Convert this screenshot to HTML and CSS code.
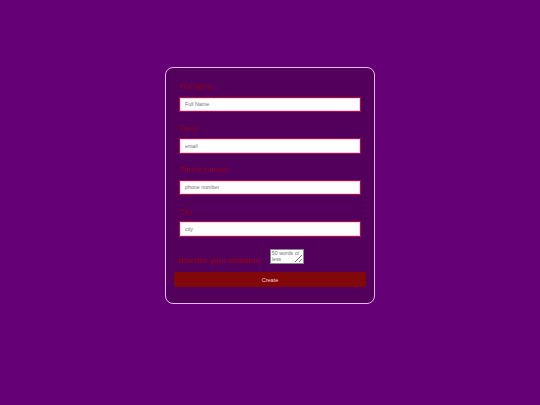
FILE: index.html
```html
<!DOCTYPE html>
<html lang="en">
<head>
<meta charset="utf-8">
<title>Create</title>
<link rel="stylesheet" href="styles.css">
</head>
<body>
<form class="card">
  <div class="field">
    <label class="label" for="name">Full Name</label>
    <input class="input" id="name" type="text" placeholder="Full Name">
  </div>
  <div class="field">
    <label class="label" for="email">Email</label>
    <input class="input" id="email" type="text" placeholder="email">
  </div>
  <div class="field">
    <label class="label" for="phone">Phone number</label>
    <input class="input" id="phone" type="text" placeholder="phone number">
  </div>
  <div class="field">
    <label class="label" for="city">City</label>
    <input class="input" id="city" type="text" placeholder="city">
  </div>
  <div class="situation">
    <label class="situation-label" for="desc">Discribe your situation:</label>
    <textarea class="textarea" id="desc" placeholder="50 words or less"></textarea>
  </div>
  <button class="btn" type="button">Create</button>
</form>
</body>
</html>
```
FILE: styles.css
```css
* { box-sizing: border-box; }
html, body {
  margin: 0;
  padding: 0;
  background: #660077;
  font-family: "Liberation Sans", Arial, sans-serif;
}
body { height: 405px; overflow: hidden; }
.card {
  width: 210px;
  margin: 67px auto 0;
  padding: 14.3px 8px 16px;
  background: #52005c;
  border: 1px solid #e6b8ee;
  border-radius: 8px;
}
.field {
  margin: 0 5px 11.5px;
}
.label {
  display: block;
  font-size: 7.5px;
  line-height: 9px;
  color: #8b0018;
  margin-bottom: 5.4px;
}
.input {
  display: block;
  width: 100%;
  height: 15.6px;
  margin: 0;
  padding: 0 0 0 5px;
  border: 1px solid #a8104a;
  box-shadow: inset 0 0 0 1px #f6cfe0;
  background: #fff;
  font-family: "Liberation Sans", Arial, sans-serif;
  font-size: 5.3px;
  color: #333;
  outline: none;
}
.input::placeholder { color: #757575; }
.situation {
  display: flex;
  align-items: flex-end;
  gap: 8px;
  margin: 12px 4px 8px;
}
.situation-label {
  font-size: 7.5px;
  line-height: 7px;
  font-weight: bold;
  color: #8b0018;
}
.textarea {
  width: 34px;
  height: 15.5px;
  margin: 0;
  padding: 0.5px 1px;
  border: 1px solid #8a8a8a;
  background: #fff;
  font-family: "Liberation Sans", Arial, sans-serif;
  font-size: 5.3px;
  line-height: 6px;
  color: #333;
}
.textarea::placeholder { color: #757575; }
.btn {
  display: block;
  width: 100%;
  height: 15px;
  margin: 0;
  padding: 0;
  border: none;
  border-radius: 2px;
  background: #800808;
  color: #f2d6d6;
  font-family: "Liberation Sans", Arial, sans-serif;
  font-size: 5.5px;
}
```
